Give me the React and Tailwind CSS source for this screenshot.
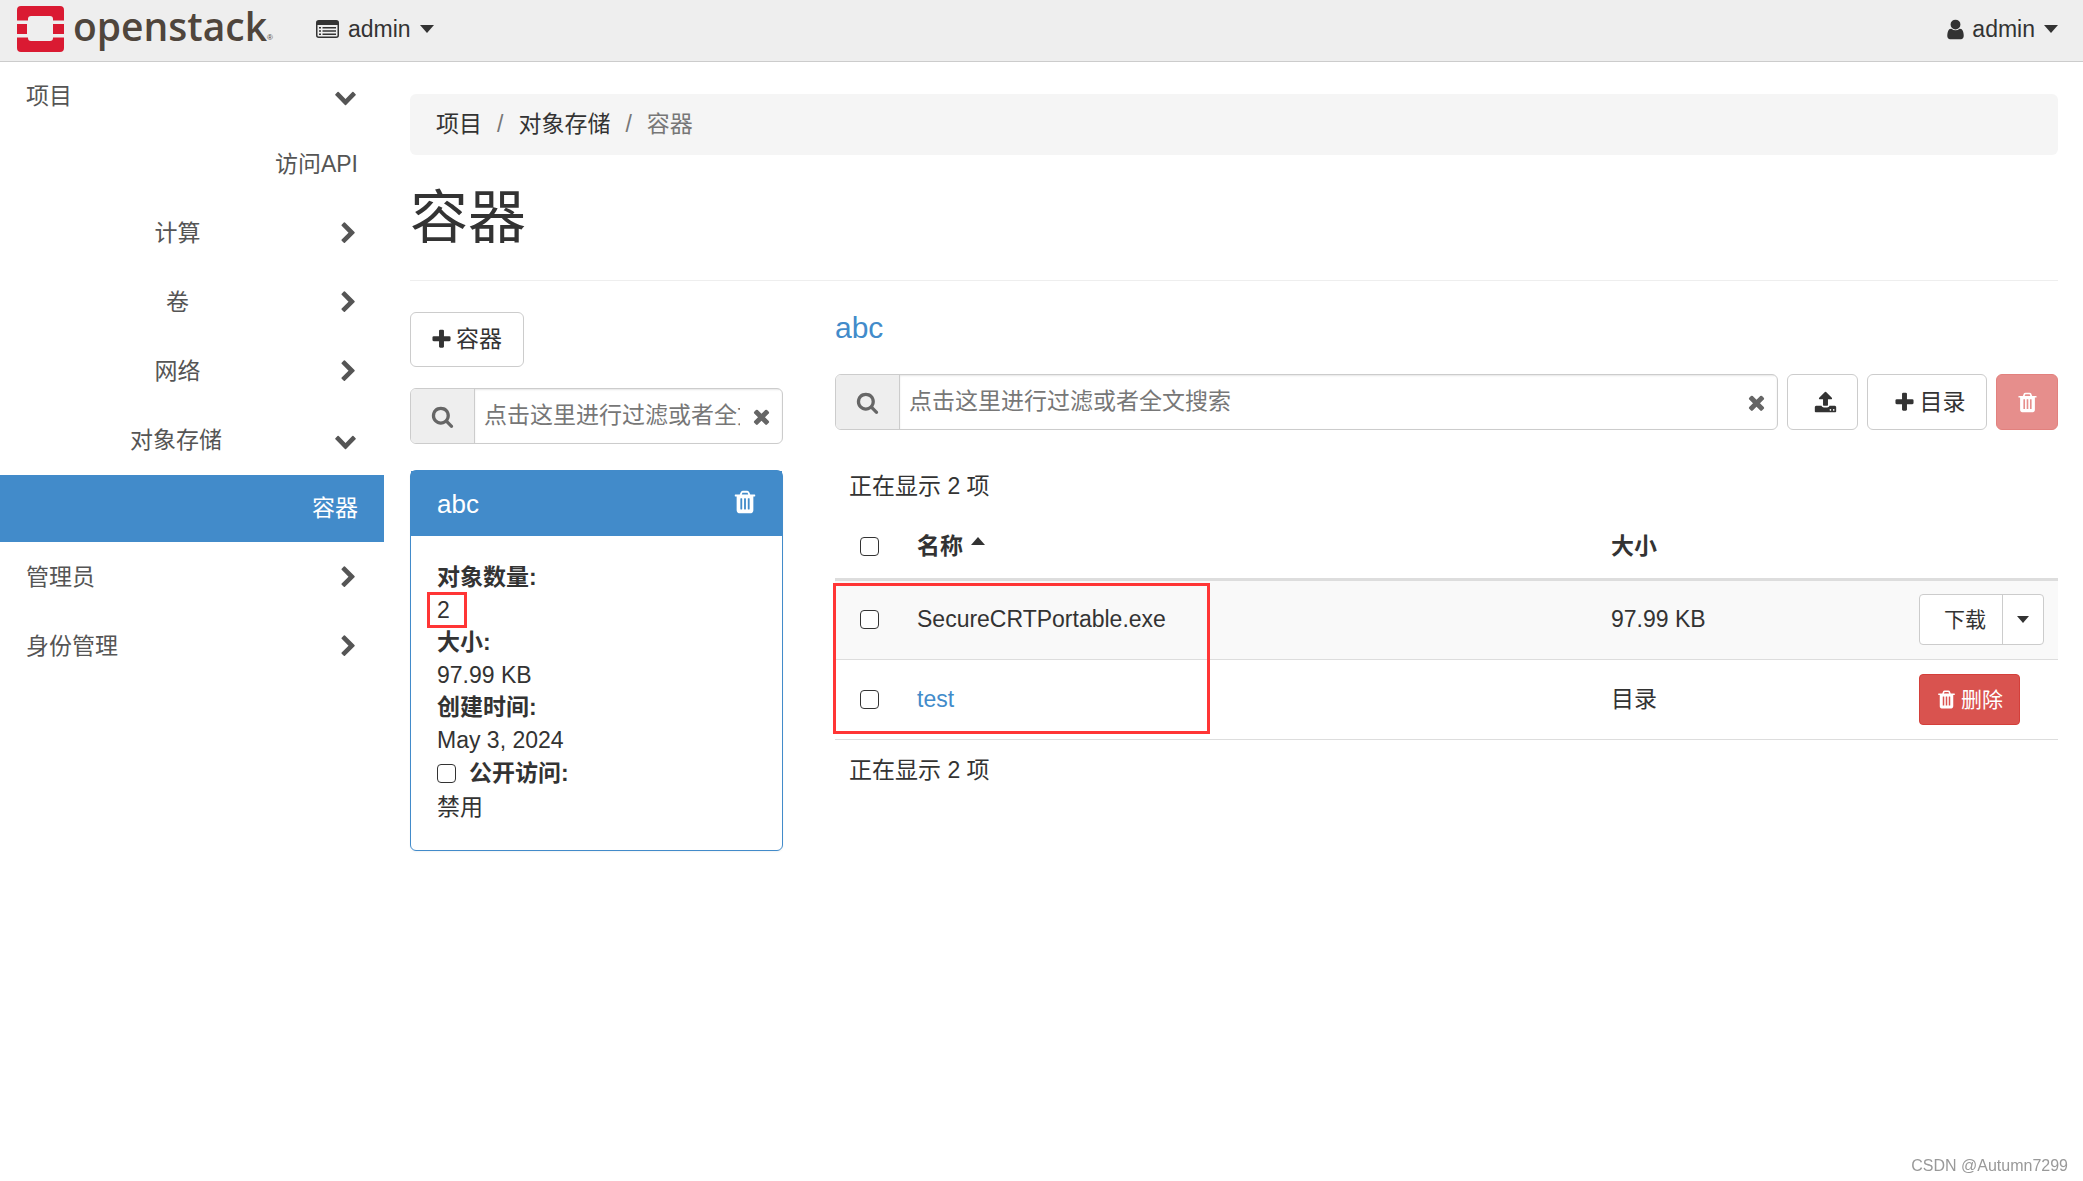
import { useState } from "react";
import clsx from "clsx";

const ICONS = {
  trash: "M704 1376v-704q0-14-9-23t-23-9h-64q-14 0-23 9t-9 23v704q0 14 9 23t23 9h64q14 0 23-9t9-23zm256 0v-704q0-14-9-23t-23-9h-64q-14 0-23 9t-9 23v704q0 14 9 23t23 9h64q14 0 23-9t9-23zm256 0v-704q0-14-9-23t-23-9h-64q-14 0-23 9t-9 23v704q0 14 9 23t23 9h64q14 0 23-9t9-23zm-544-992h448l-48-117q-7-9-17-11h-317q-10 2-17 11zm928 32v64q0 14-9 23t-23 9h-96v948q0 83-47 143.5t-113 60.5h-832q-66 0-113-58.5t-47-141.5v-952h-96q-14 0-23-9t-9-23v-64q0-14 9-23t23-9h309l70-167q15-37 54-63t79-26h320q40 0 79 26t54 63l70 167h309q14 0 23 9t9 23z",
  search: "M1216 832q0-185-131.5-316.5t-316.5-131.5-316.5 131.5-131.5 316.5 131.5 316.5 316.5 131.5 316.5-131.5 131.5-316.5zm512 832q0 52-38 90t-90 38q-54 0-90-38l-343-342q-179 124-399 124-143 0-273.5-55.5t-225-150-150-225-55.5-273.5 55.5-273.5 150-225 225-150 273.5-55.5 273.5 55.5 225 150 150 225 55.5 273.5q0 220-124 399l343 343q37 37 37 90z",
  times: "M1490 1322q0 40-28 68l-136 136q-28 28-68 28t-68-28l-294-294-294 294q-28 28-68 28t-68-28l-136-136q-28-28-28-68t28-68l294-294-294-294q-28-28-28-68t28-68l136-136q28-28 68-28t68 28l294 294 294-294q28-28 68-28t68 28l136 136q28 28 28 68t-28 68l-294 294 294 294q28 28 28 68z",
  plus: "M1600 736v192q0 40-28 68t-68 28h-416v416q0 40-28 68t-68 28h-192q-40 0-68-28t-28-68v-416h-416q-40 0-68-28t-28-68v-192q0-40 28-68t68-28h416v-416q0-40 28-68t68-28h192q40 0 68 28t28 68v416h416q40 0 68 28t28 68z",
  upload: "M1344 1472q0-26-19-45t-45-19-45 19-19 45 19 45 45 19 45-19 19-45zm256 0q0-26-19-45t-45-19-45 19-19 45 19 45 45 19 45-19 19-45zm128-224v320q0 40-28 68t-68 28h-1472q-40 0-68-28t-28-68v-320q0-40 28-68t68-28h427q21 56 70.5 92t110.5 36h256q61 0 110.5-36t70.5-92h427q40 0 68 28t28 68zm-325-648q-17 40-59 40h-256v448q0 26-19 45t-45 19h-256q-26 0-45-19t-19-45v-448h-256q-42 0-59-40-17-39 14-69l448-448q18-19 45-19t45 19l448 448q31 30 14 69z",
  user: "M1536 1399q0 109-62.5 187t-150.5 78h-854q-88 0-150.5-78t-62.5-187q0-85 8.5-160.5t31.5-152 58.5-131 94-89 134.5-34.5q131 128 313 128t313-128q76 0 134.5 34.5t94 89 58.5 131 31.5 152 8.5 160.5zm-256-887q0 159-112.5 271.5t-271.5 112.5-271.5-112.5-112.5-271.5 112.5-271.5 271.5-112.5 271.5 112.5 112.5 271.5z",
  right: "M1363 877l-742 742q-19 19-45 19t-45-19l-166-166q-19-19-19-45t19-45l531-531-531-531q-19-19-19-45t19-45l166-166q19-19 45-19t45 19l742 742q19 19 19 45t-19 45z",
  down: "M1683 808l-742 741q-19 19-45 19t-45-19l-742-741q-19-19-19-45.5t19-45.5l166-165q19-19 45-19t45 19l531 531 531-531q19-19 45-19t45 19l166 165q19 19 19 45.5t-19 45.5z",
};

const Icon = ({ name, className = "size-[23px]" }) => (
  <svg viewBox="0 0 1792 1792" fill="currentColor" aria-hidden="true" className={clsx("shrink-0", className)}>
    <path d={ICONS[name]} />
  </svg>
);

const Caret = ({ up = false, className = "w-[14px] h-[8px]" }) => (
  <svg viewBox="0 0 14 8" fill="currentColor" aria-hidden="true" className={clsx("shrink-0", className)}>
    <path d={up ? "M0 8L7 0l7 8z" : "M0 0h14L7 8z"} />
  </svg>
);

const ListIcon = () => (
  <svg viewBox="0 0 23 18" aria-hidden="true" className="w-[23px] h-[18px]">
    <rect x="0.75" y="0.75" width="21.5" height="16.5" rx="2" fill="none" stroke="currentColor" strokeWidth="1.5" />
    <path d="M1 1h21v4H1z" fill="currentColor" />
    <path d="M3 7h2v1.5H3zM3 10.3h2v1.5H3zM3 13.5h2V15H3zM6.5 7H20v1.5H6.5zM6.5 10.3H20v1.5H6.5zM6.5 13.5H20V15H6.5z" fill="currentColor" />
  </svg>
);

const Logo = () => (
  <a href="#" className="flex items-start text-[#4f453c]">
    <svg viewBox="0 0 47 46" aria-hidden="true" className="w-[47px] h-[46px] mr-[9px]">
      <path
        d="M4 0h39a4 4 0 0 1 4 4v10.500H36V13a3 3 0 0 0-3-3H14a3 3 0 0 0-3 3v1.500H0V4a4 4 0 0 1 4-4zM0 18h10v10H0zM36 18h11v10H36zM0 31.500h11V32a3 3 0 0 0 3 3h19a3 3 0 0 0 3-3v-.500h11V42a4 4 0 0 1-4 4H4a4 4 0 0 1-4-4z"
        fill="#da1a32"
      />
    </svg>
    <span className="font-['Open_Sans',sans-serif] font-semibold text-[39px] leading-[40px]">openstack</span>
    <span className="text-[8px] leading-[10px] pt-[27px]">®</span>
  </a>
);

const NAV = [
  { label: "项目", type: "top", open: true },
  { label: "访问API", type: "leaf" },
  { label: "计算", type: "group" },
  { label: "卷", type: "group" },
  { label: "网络", type: "group" },
  { label: "对象存储", type: "group", open: true },
  { label: "容器", type: "leaf", active: true },
  { label: "管理员", type: "top" },
  { label: "身份管理", type: "top" },
];

const Sidebar = () => (
  <nav className="w-[384px] shrink-0 flex flex-col gap-px text-[#555]">
    {NAV.map((item) =>
      item.type === "leaf" ? (
        <a
          key={item.label}
          href="#"
          className={clsx("h-[67px] px-[26px] flex items-center justify-end", item.active && "bg-[#428bca] text-white")}
        >
          {item.label}
        </a>
      ) : (
        <button
          key={item.label}
          type="button"
          className={clsx("h-[68px] pl-[26px] flex items-center gap-2", item.open ? "pr-[27px]" : "pr-[24px]")}
        >
          <span className={clsx("flex-1", item.type === "top" ? "text-left" : "text-center")}>{item.label}</span>
          <Icon name={item.open ? "down" : "right"} />
        </button>
      )
    )}
  </nav>
);

const SearchBar = ({ id, className }) => {
  const [value, setValue] = useState("");

  return (
    <div className={clsx("relative flex h-[56px] rounded-md border border-[#ccc] overflow-hidden", className)}>
      <label htmlFor={id} aria-label="搜索" className="w-[64px] shrink-0 flex items-center justify-center bg-[#eee] border-r border-[#ccc] text-[#666]">
        <Icon name="search" />
      </label>
      <div className="flex-1 min-w-0 pl-[9px] pr-[42px] flex shadow-[inset_0_1px_2px_rgba(0,0,0,0.1)]">
        <input
          id={id}
          type="text"
          value={value}
          onChange={(e) => setValue(e.target.value)}
          placeholder="点击这里进行过滤或者全文搜索"
          className="w-full min-w-0 pb-[2px] bg-transparent outline-none placeholder:text-[#777]"
        />
      </div>
      <button type="button" aria-label="清除" onClick={() => setValue("")} className="absolute right-[9px] inset-y-0 text-[#666]">
        <Icon name="times" />
      </button>
    </div>
  );
};

const CheckBox = (props) => (
  <input type="checkbox" className="appearance-none block size-[19px] shrink-0 rounded border border-[#333] bg-white checked:bg-[#428bca]" {...props} />
);

const ContainerCard = () => (
  <section className="mt-[26px] rounded-md border border-[#428bca] shadow-xs">
    <header className="h-[65px] pl-[26px] pr-[24px] flex items-center justify-between bg-[#428bca] text-white">
      <h2 className="text-[26px] leading-[32px]">abc</h2>
      <button type="button" aria-label="删除容器" className="pb-1">
        <Icon name="trash" className="size-[26px]" />
      </button>
    </header>
    <dl className="pt-[25px] pb-[27px] px-[26px]">
      <dt className="font-bold leading-[33px]">对象数量:</dt>
      <dd className="relative leading-[32px]">
        2
        <span className="absolute -left-[10px] -top-[2px] w-[40px] h-[36px] border-3 border-[#ff3535]"></span>
      </dd>
      <dt className="font-bold leading-[33px]">大小:</dt>
      <dd className="leading-[32px]">97.99 KB</dd>
      <dt className="font-bold leading-[33px]">创建时间:</dt>
      <dd className="leading-[32px]">May 3, 2024</dd>
      <dt className="font-bold leading-[35px]">
        <label className="flex items-center gap-[13px]">
          <CheckBox />
          公开访问:
        </label>
      </dt>
      <dd className="leading-[32px]">禁用</dd>
    </dl>
  </section>
);

const ObjectTable = () => (
  <div className="relative mt-[26px]">
    <p className="h-[60px] px-[14px] flex items-center">正在显示 2 项</p>
    <table className="w-full table-fixed border-collapse text-left">
      <colgroup>
        <col className="w-[68px]" />
        <col />
        <col className="w-[308px]" />
        <col className="w-[153px]" />
      </colgroup>
      <thead>
        <tr className="h-[63px] border-b-3 border-[#ddd]">
          <th className="pl-[25px]"><CheckBox aria-label="全选" /></th>
          <th className="px-[14px]">
            <button type="button" className="flex items-start gap-2 font-bold">
              名称
              <Caret up className="w-[14px] h-[8px] mt-[7px]" />
            </button>
          </th>
          <th className="px-[14px]">大小</th>
          <th className="px-[14px]"></th>
        </tr>
      </thead>
      <tbody>
        <tr className="h-[80px] bg-[#f9f9f9] border-b border-[#ddd]">
          <td className="pl-[25px]"><CheckBox aria-label="SecureCRTPortable.exe" /></td>
          <td className="px-[14px]">SecureCRTPortable.exe</td>
          <td className="px-[14px]">97.99 KB</td>
          <td className="pl-[14px]">
            <div className="inline-flex h-[51px] align-middle rounded border border-[#ccc] bg-white text-[21px]">
              <button type="button" className="w-[83px] pl-2 border-r border-[#ccc]">下载</button>
              <button type="button" aria-label="更多操作" className="w-[40px] flex items-center justify-center">
                <Caret className="w-[12px] h-[7px]" />
              </button>
            </div>
          </td>
        </tr>
        <tr className="h-[80px] border-b border-[#ddd]">
          <td className="pl-[25px]"><CheckBox aria-label="test" /></td>
          <td className="px-[14px]"><a href="#" className="text-[#428bca]">test</a></td>
          <td className="px-[14px]">目录</td>
          <td className="pl-[14px]">
            <button type="button" className="h-[51px] w-[101px] flex items-center justify-center gap-1 rounded border border-[#d43f3a] bg-[#d9534f] text-white text-[21px]">
              <Icon name="trash" className="size-[21px]" />
              删除
            </button>
          </td>
        </tr>
      </tbody>
    </table>
    <p className="h-[62px] px-[14px] flex items-center">正在显示 2 项</p>
    <span className="absolute -left-[2px] top-[127px] w-[377px] h-[151px] border-3 border-[#ff3535] pointer-events-none"></span>
  </div>
);

const App = () => (
  <div className="min-h-screen bg-white font-['Liberation_Sans','Noto_Sans_CJK_SC',sans-serif] text-[23px] leading-[33px] text-[#333]">
    <header className="h-[62px] pl-[17px] pr-[25px] pb-[3px] flex items-center justify-between bg-[#eee] border-b border-[#ccc]">
      <div className="flex items-center">
        <Logo />
        <button type="button" className="ml-[43px] flex items-center gap-[9px]">
          <ListIcon />
          admin
          <Caret />
        </button>
      </div>
      <button type="button" className="flex items-center gap-[9px]">
        <span className="flex items-center gap-[5px]">
          <Icon name="user" />
          admin
        </span>
        <Caret />
      </button>
    </header>

    <div className="flex">
      <Sidebar />
      <main className="flex-1 min-w-0 pl-[26px] pr-[25px] pt-[32px]">
        <nav className="h-[61px] px-[26px] flex items-center gap-[15px] rounded-md bg-[#f5f5f5]">
          <a href="#">项目</a>
          <span className="text-[#777]">/</span>
          <a href="#">对象存储</a>
          <span className="text-[#777]">/</span>
          <span className="text-[#777]">容器</span>
        </nav>
        <h1 className="h-[126px] flex items-center text-[58px] leading-[64px] border-b border-[#eee]">容器</h1>

        <div className="mt-[31px] -mx-[26px] flex items-start">
          <div className="w-1/4 px-[26px]">
            <button type="button" className="h-[55px] w-[114px] pr-[2px] flex items-center justify-center rounded-md border border-[#ccc]">
              <Icon name="plus" />
              <span className="ml-[3px]">容器</span>
            </button>
            <SearchBar id="container-search" className="mt-[21px]" />
            <ContainerCard />
          </div>

          <div className="w-3/4 px-[26px]">
            <h2 className="text-[30px] leading-[32px]">
              <a href="#" className="text-[#428bca]">abc</a>
            </h2>
            <div className="mt-[30px] flex gap-[9px]">
              <SearchBar id="object-search" className="flex-1" />
              <button type="button" aria-label="上传" className="h-[56px] w-[71px] pl-[6px] flex items-center justify-center rounded-md border border-[#ccc]">
                <Icon name="upload" />
              </button>
              <button type="button" className="h-[56px] w-[120px] pl-1 flex items-center justify-center rounded-md border border-[#ccc]">
                <Icon name="plus" />
                <span className="ml-1">目录</span>
              </button>
              <button type="button" disabled aria-label="删除" className="h-[56px] w-[62px] flex items-center justify-center rounded-md border border-[#d43f3a] bg-[#d9534f] text-white opacity-65">
                <Icon name="trash" />
              </button>
            </div>
            <ObjectTable />
          </div>
        </div>
      </main>
    </div>

    <footer className="fixed right-[15px] bottom-[3px] text-[16px] leading-[24px] text-[#999]">CSDN @Autumn7299</footer>
  </div>
);

export default App;
